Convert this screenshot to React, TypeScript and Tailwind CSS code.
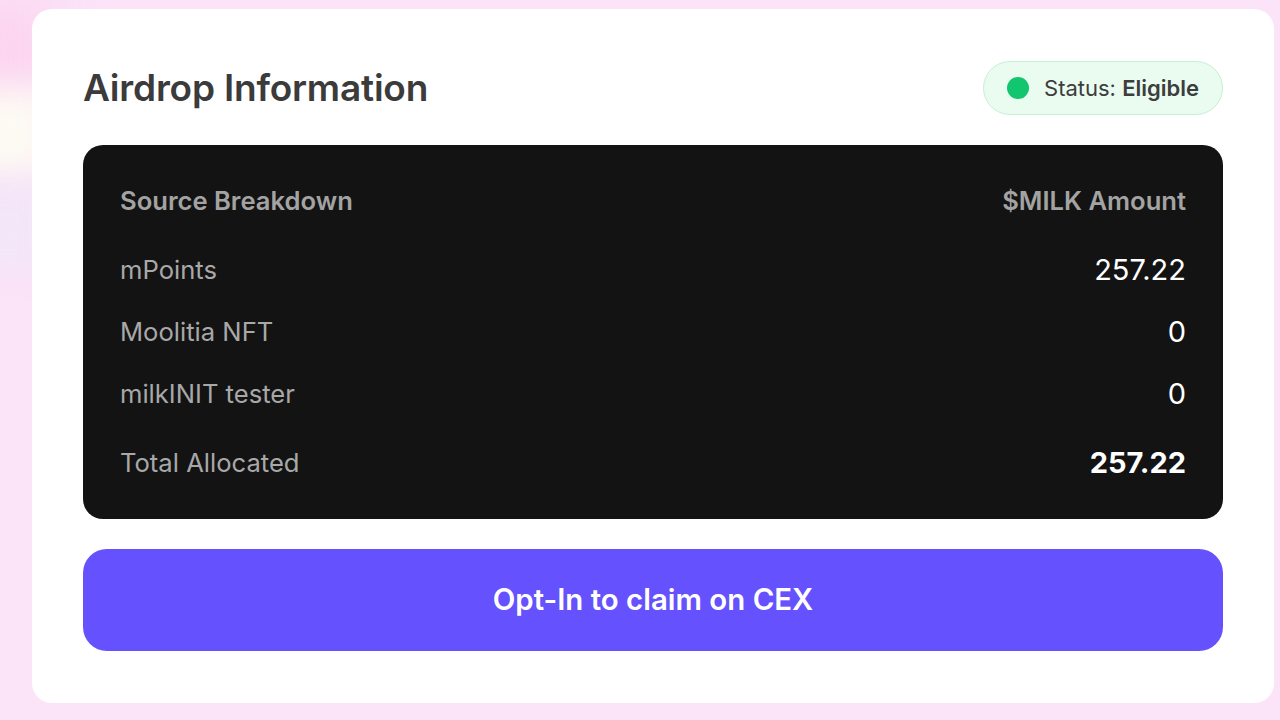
const ROWS = [
  { label: "mPoints", amount: "257.22" },
  { label: "Moolitia NFT", amount: "0" },
  { label: "milkINIT tester", amount: "0" },
];

export default function App() {
  return (
    <div
      className="relative w-[1280px] h-[720px] overflow-hidden bg-[#fbe3f8]"
      style={{ fontFamily: "Inter, 'Noto Sans', sans-serif" }}
    >
      <div className="absolute -left-10 top-0 w-[90px] h-[90px] bg-[#fcd4ef] blur-xl" />
      <div className="absolute -left-10 top-[90px] w-[90px] h-[90px] bg-[#fdfaf3] blur-lg" />
      <div className="absolute -left-10 top-[180px] w-[90px] h-[90px] bg-[#f3e6f8] blur-lg" />

      <div className="relative ml-[32px] mt-[9px] w-[1242px] h-[694px] rounded-[20px] bg-white px-[51px] pt-[52px] flex flex-col">
        <div className="flex items-center justify-between h-[54px]">
          <h1 className="text-[37px] font-semibold text-[#3b3b3b] tracking-[-0.2px]">
            Airdrop Information
          </h1>
          <div className="flex items-center gap-[15px] h-[54px] pl-[23px] pr-[23px] rounded-full bg-[#eafbf0] border border-[#c6efd6]">
            <span className="w-[22px] h-[22px] rounded-full bg-[#11c66f]" />
            <span className="text-[22px] text-[#3d3d3d]">
              Status: <span className="font-semibold">Eligible</span>
            </span>
          </div>
        </div>

        <div className="mt-[30px] h-[374px] rounded-[20px] bg-[#131313] px-[37px] pt-[38px]">
          <div className="flex items-center justify-between h-[36px] text-[25.6px] font-semibold text-[#a3a3a3]">
            <span>Source Breakdown</span>
            <span>$MILK Amount</span>
          </div>
          <div className="mt-[20px]">
            {ROWS.map((r) => (
              <div key={r.label} className="flex items-center justify-between h-[62px]">
                <span className="text-[25.6px] text-[#a8a8a8]">{r.label}</span>
                <span className="text-[29px] text-white">{r.amount}</span>
              </div>
            ))}
          </div>
          <div className="flex items-center justify-between h-[62px] mt-[7px]">
            <span className="text-[25.6px] text-[#a8a8a8]">Total Allocated</span>
            <span className="text-[29px] font-bold text-white">257.22</span>
          </div>
        </div>

        <button className="mt-[30px] h-[102px] w-full rounded-[24px] bg-[#6551fd] text-white text-[29.4px] font-semibold">
          Opt-In to claim on CEX
        </button>
      </div>
    </div>
  );
}
